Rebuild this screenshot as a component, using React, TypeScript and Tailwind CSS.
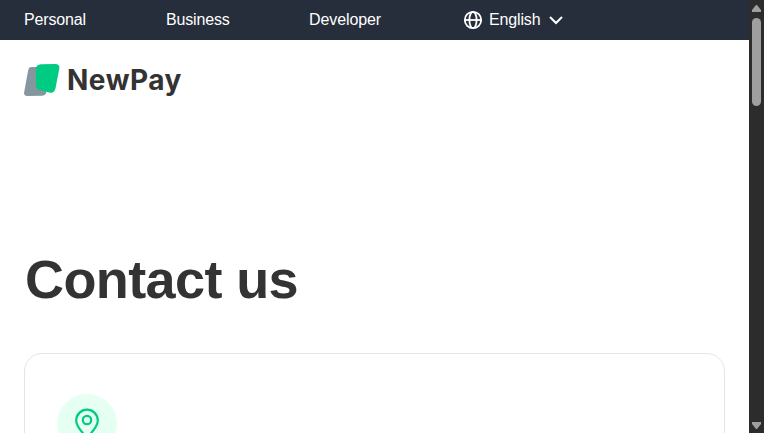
import React from "react";

function Logo() {
  return (
    <div className="flex items-center">
      <svg width="36" height="34" viewBox="0 0 36 34" className="shrink-0">
        <path d="M7.6 4 Q4.9 4 4.3 6.8 L.1 29.4 Q-.3 33 3.2 33 L17.8 32.8 Q21.2 32.6 22.3 29.4 L26 7.5 Q26.3 4 22.8 4Z" fill="#84979f" />
        <path d="M17 1.2 L31.2 1 Q36 1.2 35.3 5.4 L31.4 25.8 Q30.2 30.2 26.2 29.8 L15.9 27 Q12 25.6 12 22 L12 6 Q12.2 1.5 17 1.2Z" fill="#00cb82" />
      </svg>
      <span className="ml-[7px] font-['Inter',sans-serif] text-[28px] leading-[34px] font-bold tracking-[0.5px] text-[#333]">NewPay</span>
    </div>
  );
}

function Scrollbar() {
  return (
    <div className="flex h-full w-[15px] shrink-0 flex-col items-center bg-[#2c2c2c] pt-[5px] pb-[4px]">
      <svg width="9" height="7" viewBox="0 0 9 7" className="shrink-0">
        <path d="M4 0h1l4 5v2H0V5z" fill="#9f9f9f" />
      </svg>
      <div className="mt-[6px] h-[88px] w-[9px] shrink-0 rounded-full bg-[#9f9f9f]" />
      <svg width="9" height="7" viewBox="0 0 9 7" className="mt-auto shrink-0">
        <path d="M0 0h9v2L5 7H4L0 2z" fill="#9f9f9f" />
      </svg>
    </div>
  );
}

export default function App() {
  return (
    <div className="flex h-[433px] w-[764px] overflow-hidden bg-white font-['Liberation_Sans',Arial,sans-serif] text-[#333]">
      <div className="flex min-w-0 flex-1 flex-col">
        <nav className="flex h-10 shrink-0 items-center bg-[#272e3b] pl-6 text-base text-white">
          <a className="w-[142px] tracking-[-0.15px]">Personal</a>
          <a className="w-[143px] tracking-[-0.15px]">Business</a>
          <a className="w-[154px] tracking-[-0.1px]">Developer</a>
          <div className="flex items-center">
            <svg width="20" height="20" viewBox="0 0 20 20" fill="none" stroke="white" strokeWidth="1.8">
              <circle cx="10" cy="10" r="8.2" />
              <ellipse cx="10" cy="10" rx="3.6" ry="8.2" />
              <path d="M2 10h16" />
            </svg>
            <span className="ml-[6px] w-[60px] tracking-[-0.15px]">English</span>
            <svg width="14" height="10" viewBox="0 0 14 10" fill="none" stroke="white" strokeWidth="2">
              <path d="M1 2l6 6 6-6" />
            </svg>
          </div>
        </nav>
        <header className="px-6 pt-[23px]">
          <Logo />
        </header>
        <main className="flex flex-col px-6 pt-[149px]">
          <h1 className="mb-[41px] pl-px text-[54px] leading-[66px] font-bold tracking-[-0.6px]">Contact us</h1>
          <section className="h-[200px] rounded-[18px] border border-[#e4e4e7] px-8 pt-10">
            <div className="flex size-[60px] items-center justify-center rounded-full bg-[#e6fff3]">
              <svg width="26" height="32" viewBox="0 0 26 32" fill="none" stroke="#00cb82" strokeWidth="2.2">
                <path d="M13 29.5C9.5 26 2.2 19 2.2 12.5a10.8 10.8 0 0 1 21.6 0C23.8 19 16.5 26 13 29.5Z" />
                <circle cx="13" cy="12" r="4.2" />
              </svg>
            </div>
          </section>
        </main>
      </div>
      <Scrollbar />
    </div>
  );
}
